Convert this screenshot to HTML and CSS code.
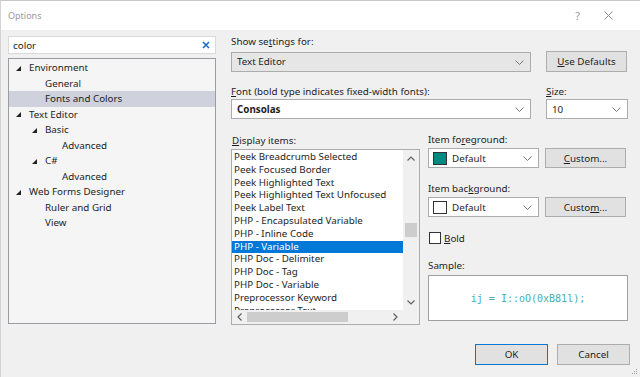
FILE: index.html
```html
<!DOCTYPE html>
<html lang="en">

<head>
    <meta charset="UTF-8">
    <meta name="viewport" content="width=device-width, initial-scale=1.0">
    <title>Options</title>
    <link rel="stylesheet" href="styles.css">
</head>

<body>
    <div class="window">
        <!-- Title bar -->
        <div class="titlebar">
            <span class="title">Options</span>
            <span class="help">?</span>
            <svg class="close" width="9" height="9" viewBox="0 0 9 9">
                <path d="M0.5 0.5 L8.5 8.5 M8.5 0.5 L0.5 8.5" stroke="#8a8a8a" stroke-width="1" fill="none" />
            </svg>
        </div>

        <div class="content">
            <div class="main">
                <!-- Left: search + tree -->
                <div class="left">
                    <div class="search">
                        <span>color</span>
                        <svg width="8" height="8" viewBox="0 0 8 8">
                            <path d="M1 1 L7 7 M7 1 L1 7" stroke="#1c6fc9" stroke-width="1.6" fill="none" />
                        </svg>
                    </div>
                    <div class="tree">
                        <div class="node lvl0"><i class="tri"></i>Environment</div>
                        <div class="node lvl1">General</div>
                        <div class="node lvl1 selected">Fonts and Colors</div>
                        <div class="node lvl0"><i class="tri"></i>Text Editor</div>
                        <div class="node lvl1"><i class="tri"></i>Basic</div>
                        <div class="node lvl2">Advanced</div>
                        <div class="node lvl1"><i class="tri"></i>C#</div>
                        <div class="node lvl2">Advanced</div>
                        <div class="node lvl0"><i class="tri"></i>Web Forms Designer</div>
                        <div class="node lvl1">Ruler and Grid</div>
                        <div class="node lvl1">View</div>
                    </div>
                </div>

                <!-- Right: settings -->
                <div class="right">
                    <div class="label">Show se<u>t</u>tings for:</div>
                    <div class="row">
                        <div class="combo grey wide">Text Editor
                            <svg class="chev" width="9" height="5" viewBox="0 0 9 5"><path d="M0.5 0.5 L4.5 4.5 L8.5 0.5" stroke="#777" fill="none" /></svg>
                        </div>
                        <button class="btn defaults"><u>U</u>se Defaults</button>
                    </div>

                    <div class="row labels">
                        <div class="label wide"><u>F</u>ont (bold type indicates fixed-width fonts):</div>
                        <div class="label"><u>S</u>ize:</div>
                    </div>
                    <div class="row">
                        <div class="combo wide bold">Consolas
                            <svg class="chev" width="9" height="5" viewBox="0 0 9 5"><path d="M0.5 0.5 L4.5 4.5 L8.5 0.5" stroke="#777" fill="none" /></svg>
                        </div>
                        <div class="combo size">10
                            <svg class="chev" width="9" height="5" viewBox="0 0 9 5"><path d="M0.5 0.5 L4.5 4.5 L8.5 0.5" stroke="#777" fill="none" /></svg>
                        </div>
                    </div>

                    <div class="lower">
                        <div class="items-col">
                            <div class="label"><u>D</u>isplay items:</div>
                            <div class="listbox">
                                <div class="items">
                                    <div class="item">Peek Breadcrumb Selected</div>
                                    <div class="item">Peek Focused Border</div>
                                    <div class="item">Peek Highlighted Text</div>
                                    <div class="item">Peek Highlighted Text Unfocused</div>
                                    <div class="item">Peek Label Text</div>
                                    <div class="item">PHP - Encapsulated Variable</div>
                                    <div class="item">PHP - Inline Code</div>
                                    <div class="item active">PHP - Variable</div>
                                    <div class="item">PHP Doc - Delimiter</div>
                                    <div class="item">PHP Doc - Tag</div>
                                    <div class="item">PHP Doc - Variable</div>
                                    <div class="item">Preprocessor Keyword</div>
                                    <div class="item">Preprocessor Text</div>
                                </div>
                                <div class="vscroll">
                                    <svg width="8" height="5" viewBox="0 0 8 5"><path d="M0.5 4.5 L4 1 L7.5 4.5" stroke="#606060" stroke-width="1.2" fill="none" /></svg>
                                    <div class="vtrack"><div class="vthumb"></div></div>
                                    <svg width="8" height="5" viewBox="0 0 8 5"><path d="M0.5 0.5 L4 4 L7.5 0.5" stroke="#606060" stroke-width="1.2" fill="none" /></svg>
                                </div>
                                <div class="hscroll">
                                    <svg width="5" height="8" viewBox="0 0 5 8"><path d="M4.5 0.5 L1 4 L4.5 7.5" stroke="#606060" stroke-width="1.2" fill="none" /></svg>
                                    <div class="htrack"><div class="hthumb"></div></div>
                                    <svg width="5" height="8" viewBox="0 0 5 8"><path d="M0.5 0.5 L4 4 L0.5 7.5" stroke="#606060" stroke-width="1.2" fill="none" /></svg>
                                </div>
                                <div class="corner"></div>
                            </div>
                        </div>

                        <div class="props-col">
                            <div class="label">Item fo<u>r</u>eground:</div>
                            <div class="row">
                                <div class="combo color"><i class="swatch teal"></i>Default
                                    <svg class="chev" width="9" height="5" viewBox="0 0 9 5"><path d="M0.5 0.5 L4.5 4.5 L8.5 0.5" stroke="#777" fill="none" /></svg>
                                </div>
                                <button class="btn custom"><u>C</u>ustom...</button>
                            </div>

                            <div class="label gap">Item bac<u>k</u>ground:</div>
                            <div class="row">
                                <div class="combo color"><i class="swatch"></i>Default
                                    <svg class="chev" width="9" height="5" viewBox="0 0 9 5"><path d="M0.5 0.5 L4.5 4.5 L8.5 0.5" stroke="#777" fill="none" /></svg>
                                </div>
                                <button class="btn custom">Custo<u>m</u>...</button>
                            </div>

                            <div class="check gap"><i class="box"></i><span><u>B</u>old</span></div>

                            <div class="label sample-label">Sample:</div>
                            <div class="sample">ij = I::oO(0xB81l);</div>
                        </div>
                    </div>
                </div>
            </div>

            <div class="footer">
                <button class="btn ok">OK</button>
                <button class="btn">Cancel</button>
            </div>
            <svg class="grip" width="6" height="6" viewBox="0 0 6 6">
                <rect x="4" y="0" width="1" height="1" fill="#a0a0a0" />
                <rect x="2" y="2" width="1" height="1" fill="#a0a0a0" />
                <rect x="4" y="2" width="1" height="1" fill="#a0a0a0" />
                <rect x="0" y="4" width="1" height="1" fill="#a0a0a0" />
                <rect x="2" y="4" width="1" height="1" fill="#a0a0a0" />
                <rect x="4" y="4" width="1" height="1" fill="#a0a0a0" />
            </svg>
        </div>
    </div>
</body>

</html>
```

FILE: styles.css
```css
* {
    box-sizing: border-box;
}

body {
    margin: 0;
    width: 640px;
    height: 377px;
    overflow: hidden;
    font-family: "Noto Sans", sans-serif;
    font-size: 9.8px;
    color: #1e1e1e;
}

.window {
    width: 640px;
    height: 377px;
    display: flex;
    flex-direction: column;
    border-top: 1px solid #c8c8c8;
    border-left: 1px solid #d4d4d4;
    background-color: #f0f0f0;
}

.titlebar {
    height: 29px;
    background-color: #fff;
    display: flex;
    align-items: center;
    padding-left: 7px;
}

.title {
    color: #9a9a9a;
    font-size: 9px;
    flex: 1;
}

.help {
    color: #9a9a9a;
    font-size: 11px;
    margin-right: 24px;
}

.close {
    margin-right: 27px;
}

.content {
    flex: 1;
    position: relative;
    display: flex;
    flex-direction: column;
    padding-top: 6px;
}

.main {
    display: flex;
}

/* Left column */
.left {
    width: 208px;
    margin-left: 7px;
    display: flex;
    flex-direction: column;
}

.search {
    height: 18px;
    background-color: #fff;
    border: 1px solid #d9d9d9;
    display: flex;
    align-items: center;
    justify-content: space-between;
    padding: 0 5px 0 4px;
}

.tree {
    margin-top: 4px;
    height: 266px;
    background-color: #f5f5f5;
    border: 1px solid #9a9ca2;
    padding-top: 1px;
}

.node {
    height: 15.5px;
    line-height: 15.5px;
    display: flex;
    align-items: center;
    position: relative;
}

.lvl0 {
    padding-left: 20px;
}

.lvl1 {
    padding-left: 36px;
}

.lvl2 {
    padding-left: 53px;
}

.node.selected {
    background-color: #cfd1dc;
}

.tri {
    width: 0;
    height: 0;
    border-left: 5px solid transparent;
    border-bottom: 5px solid #222;
    margin-left: -13px;
    margin-right: 8px;
    margin-top: 1px;
}

/* Right column */
.right {
    margin-left: 15px;
    width: 397px;
    display: flex;
    flex-direction: column;
}

.label {
    height: 14px;
    line-height: 14px;
}

.row {
    display: flex;
    justify-content: space-between;
    align-items: center;
}

.right > .label {
    margin-top: -1px;
    margin-bottom: 2px;
}

.row.labels {
    margin-top: 13px;
    margin-bottom: 0;
}

.row.labels .label.wide {
    width: 313px;
}

.row.labels .label:last-child {
    width: 82px;
}

.combo {
    height: 20px;
    border: 1px solid #acacac;
    background-color: #fff;
    display: flex;
    align-items: center;
    padding-left: 5px;
    position: relative;
}

.combo .chev {
    position: absolute;
    right: 6px;
    top: 7px;
}

.combo.grey {
    background-color: #e6e6e6;
}

.combo.wide {
    width: 300px;
}

.combo.size {
    width: 82px;
}

.combo.bold {
    font-weight: bold;
}

.btn {
    font-family: inherit;
    font-size: 9.8px;
    color: #1e1e1e;
    height: 21px;
    width: 73px;
    background-color: #e1e1e1;
    border: 1px solid #adadad;
    padding: 0;
}

.btn.defaults {
    width: 81px;
    margin-right: 1px;
}

/* Lower section */
.lower {
    display: flex;
    margin-top: 15px;
}

.items-col {
    width: 189px;
    display: flex;
    flex-direction: column;
}

.items-col .label {
    margin-bottom: 1px;
    padding-left: 1px;
}

.listbox {
    height: 176px;
    border: 1px solid #acacac;
    background-color: #fff;
    display: grid;
    grid-template-columns: 1fr 16px;
    grid-template-rows: 1fr 14px;
}

.items {
    overflow: hidden;
    padding-top: 1px;
}

.item {
    height: 12.8px;
    line-height: 12.8px;
    padding-left: 2px;
    white-space: nowrap;
}

.item.active {
    background-color: #0078d7;
    color: #fff;
}

.vscroll {
    background-color: #f0f0f0;
    display: flex;
    flex-direction: column;
    align-items: center;
    padding: 6px 0 5px;
}

.vtrack {
    flex: 1;
    width: 100%;
    position: relative;
}

.vthumb {
    position: absolute;
    left: 2px;
    right: 2px;
    top: 62px;
    height: 14px;
    background-color: #cdcdcd;
}

.hscroll {
    background-color: #f0f0f0;
    display: flex;
    align-items: center;
    padding: 0 5px 0 5px;
}

.htrack {
    flex: 1;
    height: 100%;
    position: relative;
}

.hthumb {
    position: absolute;
    top: 2px;
    bottom: 2px;
    left: 5px;
    width: 101px;
    background-color: #cdcdcd;
}

.corner {
    background-color: #f0f0f0;
}

.props-col {
    margin-left: 8px;
    width: 200px;
    display: flex;
    flex-direction: column;
    margin-top: -1px;
}

.props-col .label {
    margin-bottom: 1px;
}

.combo.color {
    width: 111px;
    padding-left: 4px;
}

.swatch {
    width: 14px;
    height: 13px;
    border: 1px solid #333;
    margin-right: 5px;
    background-color: #fff;
}

.swatch.teal {
    background-color: #008a80;
}

.btn.custom {
    width: 81px;
    height: 20px;
    margin-right: 2px;
}

.gap {
    margin-top: 14px;
}

.check {
    display: flex;
    align-items: center;
    height: 14px;
}

.box {
    width: 12px;
    height: 12px;
    border: 1px solid #333;
    background-color: #fff;
    margin-right: 3px;
    margin-left: 1px;
}

.sample-label {
    margin-top: 14px;
}

.props-col .sample-label {
    margin-bottom: 2px;
}

.sample {
    height: 46px;
    border: 1px solid #a0a0a0;
    background-color: #fff;
    display: flex;
    align-items: center;
    justify-content: center;
    font-family: "DejaVu Sans Mono", monospace;
    font-size: 10px;
    color: #45b0b0;
}

/* Footer */
.footer {
    display: flex;
    justify-content: flex-end;
    gap: 9px;
    margin-top: 19px;
    padding-right: 10px;
}

.btn.ok {
    border-color: #0078d7;
}

.grip {
    position: absolute;
    right: 2px;
    bottom: 2px;
}
```
